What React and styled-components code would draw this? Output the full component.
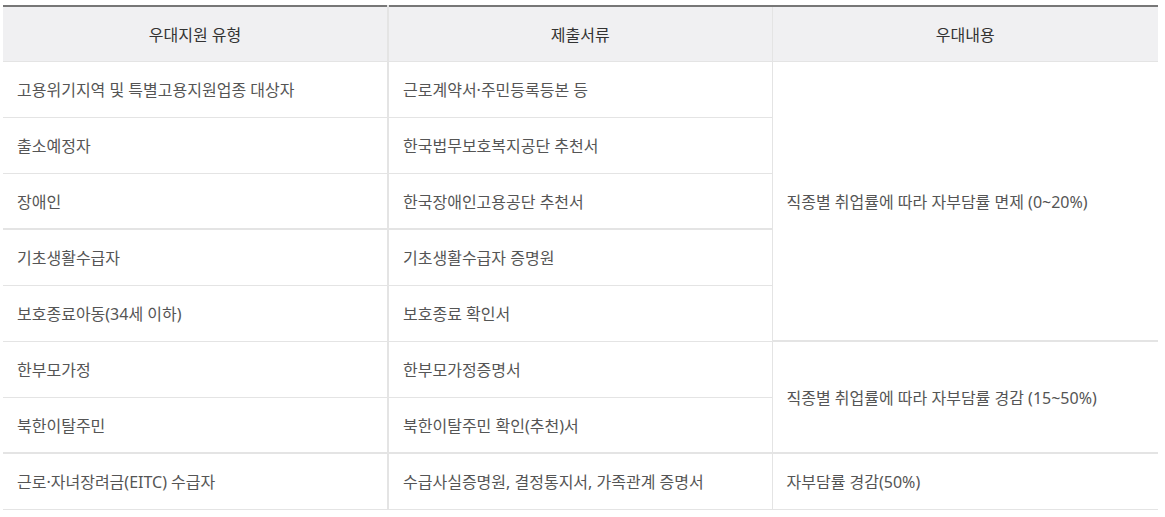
import React from 'react'
import styled, { createGlobalStyle } from 'styled-components'

const GlobalStyle = createGlobalStyle`
  body {
    margin: 0;
    background: #fff;
    font-family: "Noto Sans", "Noto Sans CJK KR", sans-serif;
  }
`;

const rows = [
  { type: '고용위기지역 및 특별고용지원업종 대상자', doc: '근로계약서·주민등록등본 등' },
  { type: '출소예정자', doc: '한국법무보호복지공단 추천서' },
  { type: '장애인', doc: '한국장애인고용공단 추천서', thick: true },
  { type: '기초생활수급자', doc: '기초생활수급자 증명원' },
  { type: '보호종료아동(34세 이하)', doc: '보호종료 확인서' },
  { type: '한부모가정', doc: '한부모가정증명서' },
  { type: '북한이탈주민', doc: '북한이탈주민 확인(추천)서', thick: true },
  { type: '근로·자녀장려금(EITC) 수급자', doc: '수급사실증명원, 결정통지서, 가족관계 증명서' },
]

// which rows start a benefit cell, and how many rows it covers
const benefits = {
  0: { text: '직종별 취업률에 따라 자부담률 면제 (0~20%)', span: 5 },
  5: { text: '직종별 취업률에 따라 자부담률 경감 (15~50%)', span: 2 },
  7: { text: '자부담률 경감(50%)', span: 1 },
}

function App() {
  return (
    <Wrap>
      <GlobalStyle />
      <Table>
        <colgroup>
          <col style={{ width: 385 }} />
          <col style={{ width: 384 }} />
          <col />
        </colgroup>
        <thead>
          <tr>
            <HeadCell divider={2}>우대지원 유형</HeadCell>
            <HeadCell divider={1}>제출서류</HeadCell>
            <HeadCell>우대내용</HeadCell>
          </tr>
        </thead>
        <tbody>
          {rows.map((row, i) => (
            <tr key={row.type}>
              <Cell divider={2} thick={row.thick}>{row.type}</Cell>
              <Cell divider={1} thick={row.thick}>{row.doc}</Cell>
              {benefits[i] && (
                <Cell rowSpan={benefits[i].span} thick={i === 0 || i === 5}>
                  {benefits[i].text}
                </Cell>
              )}
            </tr>
          ))}
        </tbody>
      </Table>
    </Wrap>
  )
}

export default App

const Wrap = styled.div`
  padding: 5px 7px 0 3px;
`;

const Table = styled.table`
  width: 1155px;
  border-collapse: collapse;
  table-layout: fixed;
  border-top: 2px solid #777;
`;

const HeadCell = styled.th`
  height: 55px;
  padding: 0 14px;
  background: #f0f0f2;
  color: #333;
  font-size: 16px;
  font-weight: 400;
  text-align: center;
  border-bottom: 1px solid #e4e4e4;
  border-right: ${p => (p.divider ? `${p.divider}px solid #e4e4e4` : 'none')};
  box-sizing: border-box;
`;

const Cell = styled.td`
  height: 56px;
  padding: 0 14px;
  color: #555;
  font-size: 16px;
  text-align: left;
  vertical-align: middle;
  border-bottom: ${p => (p.thick ? 2 : 1)}px solid #e4e4e4;
  border-right: ${p => (p.divider ? `${p.divider}px solid #e4e4e4` : 'none')};
  box-sizing: border-box;
`;
